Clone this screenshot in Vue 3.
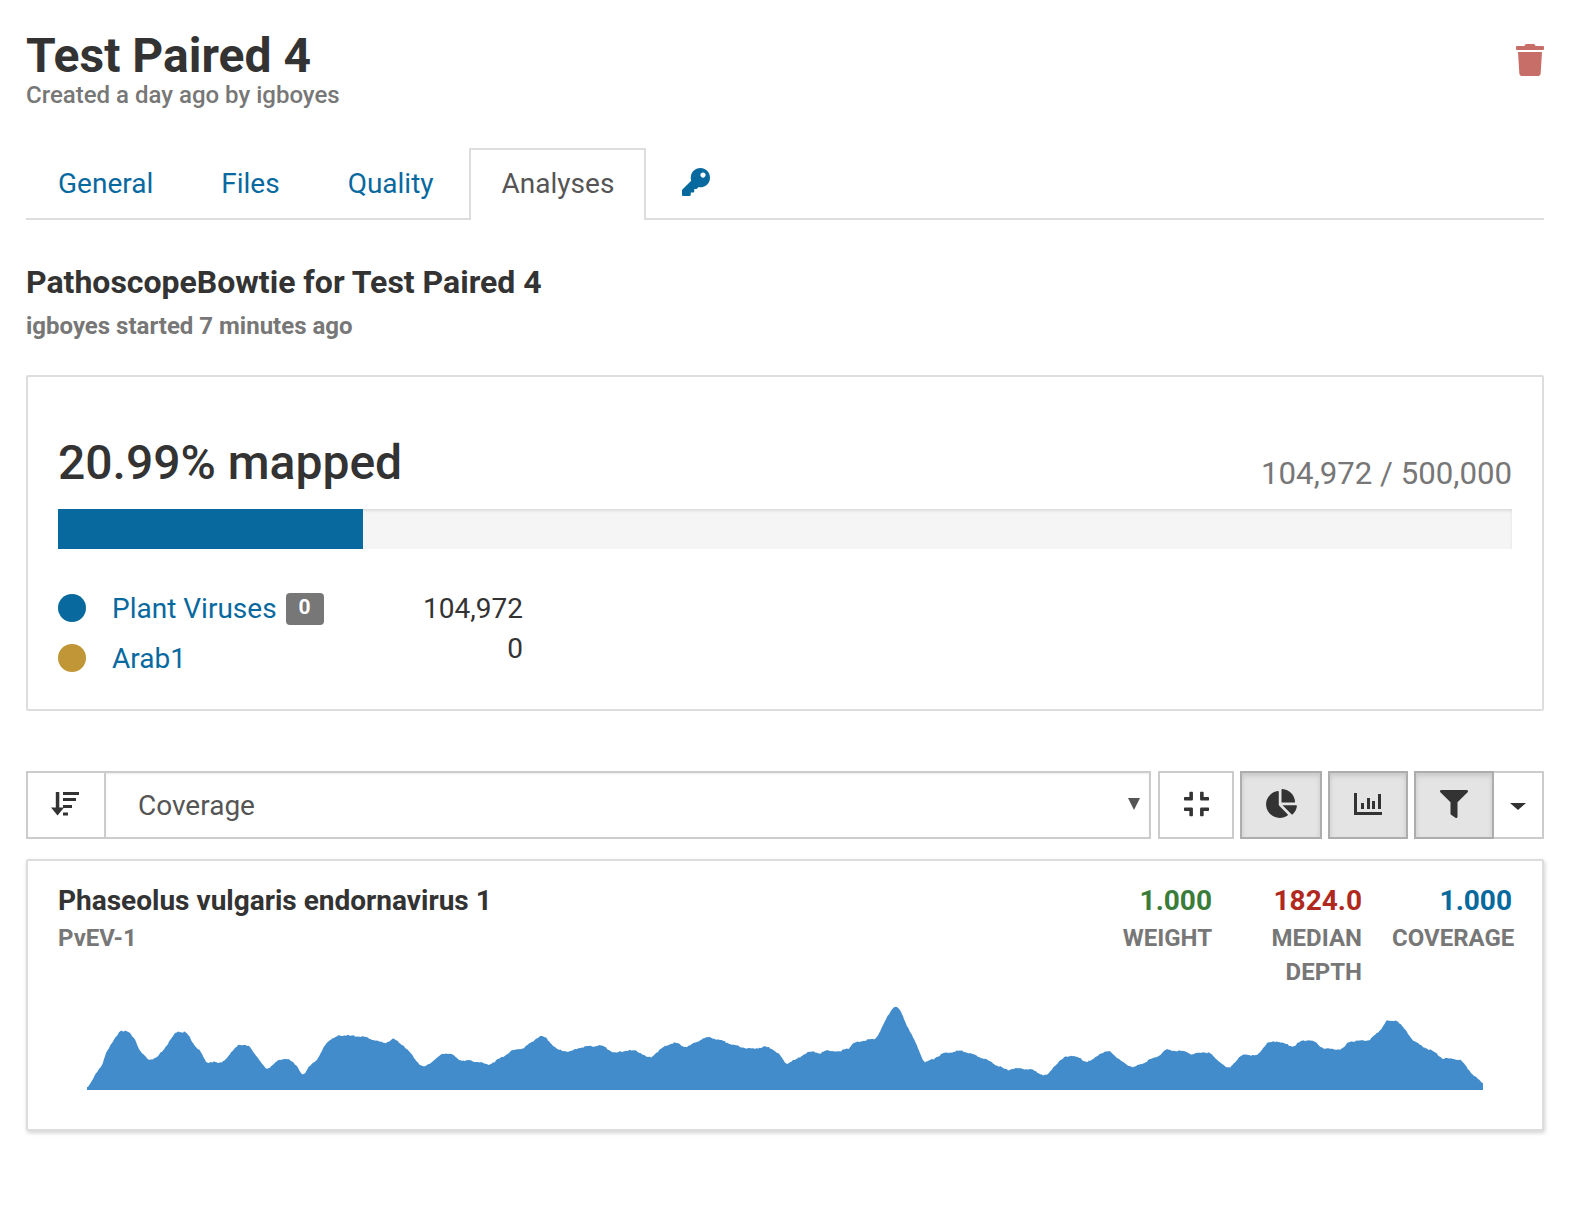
<script setup>
const raw = [
  [70,3,[[50,298],[75,255],[100,220],[105,190],[130,155],[150,120],[175,125],[198,150],[205,178],[235,210],[260,205],[295,160],[320,123],[350,128],[370,160],[395,190],[408,218],[435,215],[445,222],[470,205],[505,162],[540,170],[585,235],[595,235],[630,208],[650,205],[680,225],[700,260],[720,225],[745,205],[770,155],[810,135],[880,140],[945,160],[970,145],[1005,170],[1055,230],[1065,230],[1120,190],[1140,190],[1170,210],[1225,215],[1255,225],[1290,205],[1330,180],[1360,175],[1410,137],[1430,145],[1460,178],[1480,182]]],
  [570,3,[[0,185],[30,172],[55,168],[60,170],[90,165],[110,175],[135,190],[165,182],[200,182],[238,205],[285,168],[315,157],[350,172],[395,147],[420,142],[450,150],[490,165],[520,172],[545,177],[585,170],[605,175],[630,195],[650,225],[655,217],[680,208],[710,187],[740,185],[745,192],[775,180],[815,187],[825,170],[830,180],[855,157],[910,147],[915,150],[940,105],[960,65],[975,46],[990,60],[1015,115],[1045,175],[1060,215],[1070,217],[1120,190],[1175,182],[1240,205],[1310,240],[1335,235],[1380,237],[1425,257],[1435,255],[1450,230],[1480,205]]],
  [1000,3,[[210,195],[240,205],[255,215],[275,213],[300,190],[330,183],[365,215],[400,233],[455,207],[480,195],[497,178],[520,182],[565,185],[575,195],[605,185],[630,190],[685,238],[690,230],[730,192],[770,198],[800,160],[830,153],[880,170],[905,152],[935,150],[970,175],[1000,178],[1030,177],[1045,155],[1110,150],[1150,110],[1157,88],[1165,95],[1190,90],[1220,125],[1235,147],[1260,165],[1310,190],[1325,205],[1380,208],[1420,255],[1448,280]]]
]
const pts = raw.flatMap(([off, k, list]) => list.map(([x, y]) => [off + x / k, 990 + y / k]))
const X0 = 87, X1 = 1483, TOP = 1000, BASE = 1090

// resample the traced outline every pixel, soften it, add the fine read-depth jitter
const samples = []
let seg = 0
for (let x = X0; x <= X1; x++) {
  while (seg < pts.length - 2 && pts[seg + 1][0] < x) seg++
  const [ax, ay] = pts[seg]
  const [bx, by] = pts[seg + 1]
  const t = bx === ax ? 0 : Math.min(1, Math.max(0, (x - ax) / (bx - ax)))
  samples.push(ay + (by - ay) * t)
}
const smooth = samples.map((_, i) => {
  let s = 0, n = 0
  for (let j = Math.max(0, i - 2); j <= Math.min(samples.length - 1, i + 2); j++) { s += samples[j]; n++ }
  return s / n
})
const jitter = i => (Math.sin(i * 12.9898) * 43758.5453 % 1) * 0.8
const coords = smooth.map((y, i) => `${i},${Math.min(BASE, y + jitter(i)) - TOP}`)
const chartPath = `M0,${BASE - TOP} L${coords.join(' L')} L${X1 - X0},${BASE - TOP} Z`
const chartBox = `0 0 ${X1 - X0} ${BASE - TOP}`

const tabs = [
  { label: 'General' },
  { label: 'Files' },
  { label: 'Quality' },
  { label: 'Analyses', active: true }
]
const stats = [
  { value: '1.000', label: 'WEIGHT', cls: 'green' },
  { value: '1824.0', label: 'MEDIAN DEPTH', cls: 'red' },
  { value: '1.000', label: 'COVERAGE', cls: 'blue' }
]
</script>

<template>
  <div class="page">
    <header class="head">
      <div>
        <h1>Test Paired 4</h1>
        <div class="created">Created a day ago by igboyes</div>
      </div>
      <svg class="trash" viewBox="0 0 448 512"><path d="M432 32H312l-9.4-18.7A24 24 0 0 0 281.1 0H166.8a23.72 23.72 0 0 0-21.4 13.3L136 32H16A16 16 0 0 0 0 48v32a16 16 0 0 0 16 16h416a16 16 0 0 0 16-16V48a16 16 0 0 0-16-16zM53.2 467a48 48 0 0 0 47.9 45h245.8a48 48 0 0 0 47.9-45L416 128H32z"/></svg>
    </header>

    <nav class="tabs">
      <a v-for="t in tabs" :key="t.label" class="tab" :class="{ active: t.active }">{{ t.label }}</a>
      <a class="tab keytab">
        <svg class="key" viewBox="0 0 512 512"><path d="M512 176.001C512 273.203 433.202 352 336 352c-11.22 0-22.19-1.062-32.827-3.069l-24.012 27.014A23.999 23.999 0 0 1 261.223 384H224v40c0 13.255-10.745 24-24 24h-40v40c0 13.255-10.745 24-24 24H24c-13.255 0-24-10.745-24-24v-78.059c0-6.365 2.529-12.47 7.029-16.971l161.802-161.802C163.108 213.814 160 195.271 160 176 160 78.798 238.797.001 335.999 0 433.488-.001 512 78.511 512 176.001zM336 128c0 26.51 21.49 48 48 48s48-21.49 48-48-21.49-48-48-48-48 21.49-48 48z"/></svg>
      </a>
    </nav>

    <h2>PathoscopeBowtie for Test Paired 4</h2>
    <div class="started">igboyes started 7 minutes ago</div>

    <section class="card mapped">
      <div class="mapped-head">
        <div class="pct">20.99% mapped</div>
        <div class="ratio">104,972 / 500,000</div>
      </div>
      <div class="bar"><div class="fill" :style="{ width: '20.99%' }"></div></div>
      <div class="legend">
        <div class="names">
          <div class="row"><span class="dot dot-blue"></span><a>Plant Viruses</a><span class="badge">0</span></div>
          <div class="row"><span class="dot dot-gold"></span><a>Arab1</a></div>
        </div>
        <div class="counts">
          <div>104,972</div>
          <div>0</div>
        </div>
      </div>
    </section>

    <div class="toolbar">
      <div class="joined grow">
        <button class="btn sort">
          <svg width="28" height="24" viewBox="0 0 28 24" fill="#333">
            <rect x="4.800" y="0" width="3.500" height="20"/>
            <path d="M0 15.500h13l-6.500 8z"/>
            <rect x="12" y="0" width="16" height="3"/>
            <rect x="12" y="6" width="13" height="3"/>
            <rect x="12" y="13" width="9" height="3"/>
            <rect x="12" y="20.500" width="5" height="3"/>
          </svg>
        </button>
        <div class="select">
          <span>Coverage</span>
          <i class="select-arrow"></i>
        </div>
      </div>
      <button class="btn compress">
        <svg width="25" height="28" viewBox="0 0 448 512" preserveAspectRatio="none"><path d="M436 192H312c-13.3 0-24-10.7-24-24V44c0-6.600 5.400-12 12-12h40c6.600 0 12 5.400 12 12v84h84c6.600 0 12 5.400 12 12v40c0 6.600-5.400 12-12 12zm-276-24V44c0-6.600-5.400-12-12-12h-40c-6.600 0-12 5.400-12 12v84H12c-6.600 0-12 5.400-12 12v40c0 6.600 5.400 12 12 12h124c13.300 0 24-10.700 24-24zm0 300V344c0-13.300-10.700-24-24-24H12c-6.600 0-12 5.400-12 12v40c0 6.600 5.400 12 12 12h84v84c0 6.600 5.400 12 12 12h40c6.600 0 12-5.400 12-12zm192 0v-84h84c6.600 0 12-5.400 12-12v-40c0-6.600-5.400-12-12-12H312c-13.300 0-24 10.700-24 24v124c0 6.600 5.400 12 12 12h40c6.600 0 12-5.400 12-12z"/></svg>
      </button>
      <button class="btn on pie">
        <svg width="31" height="29" viewBox="0 0 544 512"><path d="M527.790 288H290.500l158.030 158.030c6.040 6.040 15.980 6.530 22.190.68 38.700-36.460 65.320-85.610 73.130-140.860 1.340-9.460-6.510-17.850-16.060-17.850zm-15.830-64.800C503.720 103.740 408.260 8.280 288.800.04 279.680-.59 272 7.100 272 16.240V240h223.770c9.140 0 16.820-7.680 16.190-16.800zM224 288V50.710c0-9.550-8.390-17.400-17.840-16.060C86.990 51.490-4.100 155.600.14 280.370 4.500 408.510 114.830 513.590 243.030 511.980c50.400-.63 96.970-16.870 135.260-44.030 7.900-5.600 8.420-17.230 1.570-24.080L224 288z"/></svg>
      </button>
      <button class="btn on barsbtn">
        <svg width="28" height="22" viewBox="0 0 28 22" fill="#333">
          <rect x="0" y="0" width="3" height="22"/>
          <rect x="0" y="19" width="28" height="3"/>
          <rect x="7" y="10" width="3" height="6"/>
          <rect x="13" y="5" width="3" height="11"/>
          <rect x="18" y="8" width="3" height="8"/>
          <rect x="24" y="1" width="3" height="15"/>
        </svg>
      </button>
      <div class="joined">
        <button class="btn on filter">
          <svg width="28" height="28" viewBox="0 0 512 512"><path d="M487.976 0H24.028C2.710 0-8.047 25.866 7.058 40.971L192 225.941V432c0 7.831 3.821 15.170 10.237 19.662l80 55.980C298.020 518.690 320 507.493 320 487.980V225.941l184.947-184.970C520.021 25.896 509.338 0 487.976 0z"/></svg>
        </button>
        <button class="btn caret"><i></i></button>
      </div>
    </div>

    <section class="card item">
      <div class="item-head">
        <div class="item-name">
          <div class="name">Phaseolus vulgaris endornavirus 1</div>
          <div class="abbr">PvEV-1</div>
        </div>
        <div class="stats">
          <div v-for="s in stats" :key="s.label" class="stat">
            <div class="val" :class="s.cls">{{ s.value }}</div>
            <div class="lab">{{ s.label }}</div>
          </div>
        </div>
      </div>
      <svg class="chart" :viewBox="chartBox" :width="1396" :height="90"><path :d="chartPath" fill="#428ccb"/></svg>
    </section>
  </div>
</template>

<style>
body { background: #fff; }
</style>

<style scoped>
.page {
  box-sizing: border-box;
  width: 1572px;
  height: 1228px;
  padding: 27px 28px 0 26px;
  font-family: Roboto, sans-serif;
  color: #333;
  overflow: hidden;
}
.head { display: flex; justify-content: space-between; align-items: flex-start; }
h1 { margin: 0; font-size: 48px; font-weight: 700; line-height: 58px; }
.created { font-size: 24px; font-weight: 500; line-height: 28px; color: #777; margin-top: -4px; }
.trash { width: 28px; height: 32px; fill: #c86e68; margin-top: 17px; }

.tabs {
  display: flex;
  margin-top: 39px;
  height: 72px;
  box-sizing: border-box;
  border-bottom: 2px solid #ddd;
}
.tab {
  box-sizing: border-box;
  height: 72px;
  padding: 0 30px 4px;
  margin-right: 4px;
  display: flex;
  align-items: center;
  font-size: 28px;
  color: #07699e;
  border: 2px solid transparent;
  border-bottom: 0;
}
.tab.active { color: #555; border-color: #ddd; background: #fff; margin-left: -1px; padding-left: 31px; }
.keytab { padding: 0 30px 4px; }
.key { width: 28px; height: 28px; fill: #07699e; margin-top: -2px; }

h2 { margin: 43px 0 0; font-size: 32px; line-height: 38px; font-weight: 700; }
.started { font-size: 24px; line-height: 28px; font-weight: 700; color: #777; margin-top: 11px; }

.card {
  box-sizing: border-box;
  border: 2px solid #ddd;
  border-radius: 2px;
  background: #fff;
}
.mapped {
  margin-top: 35px;
  height: 336px;
  padding: 56px 30px 0;
}
.mapped-head { display: flex; justify-content: space-between; align-items: flex-end; }
.pct { font-size: 48px; font-weight: 500; line-height: 60px; }
.ratio { font-size: 31.2px; line-height: 38px; color: #777; }
.bar { height: 40px; margin-top: 16px; background: #f5f5f5; box-shadow: inset 0 2px 3px rgba(0,0,0,.1); }
.fill { height: 100%; background: #07699e; }
.legend { display: flex; margin-top: 34px; font-size: 28px; }
.names { width: 355px; }
.row { display: flex; align-items: center; height: 50px; }
.row a { color: #07699e; }
.dot { width: 28px; height: 28px; border-radius: 50%; margin-right: 26px; }
.dot-blue { background: #07699e; }
.dot-gold { background: #c09637; }
.badge {
  margin-left: 9px; margin-top: 2px;
  width: 38px; height: 32px; border-radius: 4px; background: #777; color: #fff;
  font-size: 21px; font-weight: 700; text-align: center; line-height: 28px;
}
.counts { width: 110px; text-align: right; }
.counts div { height: 40px; line-height: 40px; }
.counts div:first-child { margin-top: 6px; }

.toolbar { display: flex; gap: 6px; height: 68px; margin-top: 60px; }
.grow { flex: 1; }
.joined { display: flex; height: 100%; }
.btn {
  box-sizing: border-box;
  height: 100%;
  border: 2px solid #ccc;
  background: #fff;
  padding: 0;
  display: flex;
  align-items: center;
  justify-content: center;
}
.btn svg { fill: #333; display: block; margin-top: -3px; }
.btn.on { background: #e4e4e4; border-color: #adadad; box-shadow: inset 0 3px 5px rgba(0,0,0,.125); }
.sort { width: 78px; border-right: 0; padding-right: 2px; }
.select {
  flex: 1;
  box-sizing: border-box;
  border: 2px solid #ccc;
  display: flex;
  align-items: center;
  justify-content: space-between;
  padding: 0 9px 0 32px;
  font-size: 28px;
  color: #555;
  box-shadow: inset 0 1px 2px rgba(0,0,0,.08);
}
.select-arrow {
  width: 0; height: 0; margin-top: -3px;
  border-left: 6px solid transparent; border-right: 6px solid transparent; border-top: 12px solid #555;
}
.compress { width: 76px; margin-left: 1px; }
.pie { width: 82px; }
.barsbtn { width: 80px; }
.filter { width: 80px; }
.caret { width: 50px; border-left: 0; }
.caret i { width: 0; height: 0; border-left: 8px solid transparent; border-right: 8px solid transparent; border-top: 7px solid #333; margin-top: 2px; }

.item {
  margin-top: 20px;
  height: 272px;
  padding: 22px 30px 0;
  box-shadow: 1px 2px 4px rgba(0,0,0,.18);
}
.item-head { display: flex; justify-content: space-between; height: 117px; }
.name { font-size: 28px; font-weight: 700; line-height: 36px; }
.abbr { font-size: 24px; font-weight: 700; color: #777; line-height: 34px; margin-top: 2px; }
.stats { display: flex; gap: 30px; text-align: right; }
.stat { width: 120px; }
.stat:first-child { width: 90px; }
.val { font-size: 28px; font-weight: 700; line-height: 36px; }
.lab { font-size: 24px; font-weight: 700; color: #777; line-height: 34px; margin-top: 2px; }
.green { color: #3a7d3a; }
.red { color: #b0291f; }
.blue { color: #07699e; }
.chart { display: block; margin: 0 0 0 29px; }
</style>
